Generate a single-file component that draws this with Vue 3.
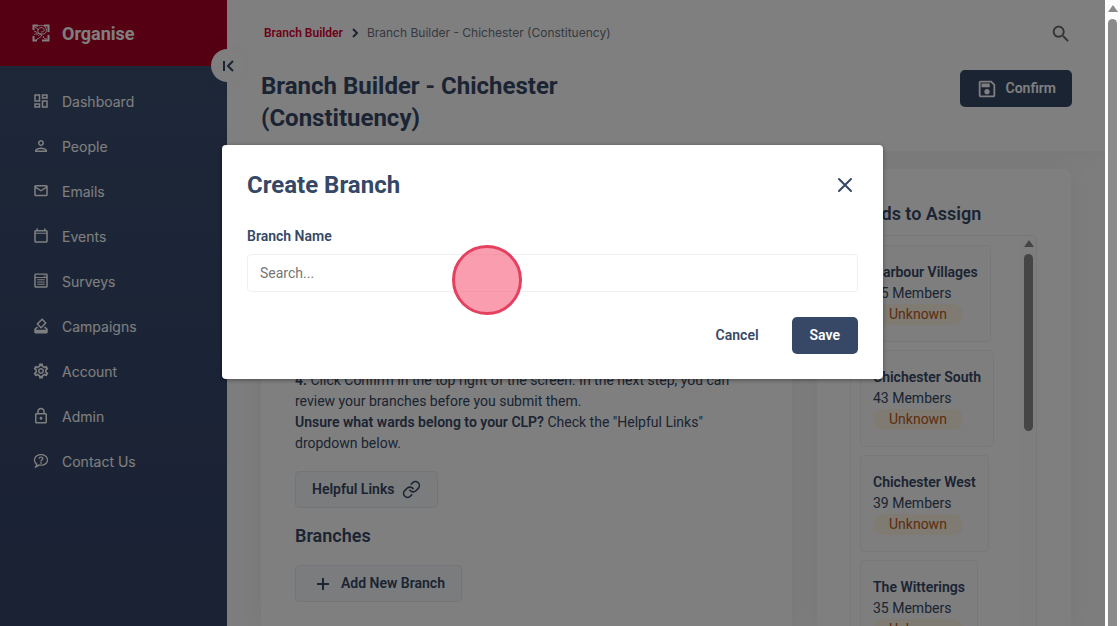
<script setup>
const nav = [
  { label: 'Dashboard', d: 'M19 5v2h-4V5h4M9 5v6H5V5h4m10 8v6h-4v-6h4M9 17v2H5v-2h4M21 3h-8v6h8V3zM11 3H3v10h8V3zm10 8h-8v10h8V11zm-10 4H3v6h8v-6z' },
  { label: 'People', d: 'M12 6c1.1 0 2 .9 2 2s-.9 2-2 2-2-.9-2-2 .9-2 2-2m0 10c2.7 0 5.8 1.29 6 2H6c.23-.72 3.31-2 6-2m0-12C9.79 4 8 5.79 8 8s1.79 4 4 4 4-1.79 4-4-1.79-4-4-4zm0 10c-2.67 0-8 1.34-8 4v2h16v-2c0-2.66-5.33-4-8-4z' },
  { label: 'Emails', d: 'M21 6c0-1.1-.9-2-2-2H5c-1.1 0-2 .9-2 2v11c0 1.1.9 2 2 2h14c1.1 0 2-.9 2-2V6zm-2 0l-7 4.500L5 6h14zm0 11H5V8.300l7 4.500 7-4.500V17z' },
  { label: 'Events', d: 'M19 4h-1V2h-2v2H8V2H6v2H5c-1.1 0-2 .9-2 2v13c0 1.1.9 2 2 2h14c1.1 0 2-.9 2-2V6c0-1.1-.9-2-2-2zm0 15H5V9h14v10zm0-11.500H5V6h14v1.500z' },
  { label: 'Surveys', d: 'M19 2H5c-1.1 0-2 .9-2 2v15c0 1.1.9 2 2 2h14c1.1 0 2-.9 2-2V4c0-1.1-.9-2-2-2zm0 1.800V6.500H5V3.800h14zM5 19V8h14v11H5zM7 9.500h10v1.600H7zM7 12.500h10v1.600H7zM7 15.500h10v1.600H7zM15.500 4.500H18V6h-2.500z' },
  { label: 'Campaigns', d: 'M18 13h-.68l-2 2h1.91L19 17H5l1.78-2h2.05l-2-2H6l-3 3v4c0 1.1.89 2 1.99 2H19c1.1 0 2-.89 2-2v-4l-3-3zm-1-5.05l-4.95 4.95-3.54-3.54 4.95-4.95L17 7.95zm-4.24-5.66L6.39 8.66c-.39.39-.39 1.020 0 1.41l4.950 4.950c.39.39 1.020.39 1.41 0l6.36-6.36c.39-.39.39-1.020 0-1.41L14.160 2.300c-.38-.4-1.010-.4-1.400-.01z' },
  { label: 'Account', d: 'M19.430 12.980c.04-.32.07-.64.07-.98s-.03-.66-.07-.98l2.110-1.650c.19-.15.24-.42.12-.64l-2-3.460c-.12-.22-.39-.3-.61-.22l-2.490 1c-.52-.4-1.080-.73-1.690-.98l-.38-2.650C14.460 2.180 14.250 2 14 2h-4c-.25 0-.46.18-.49.42l-.38 2.650c-.61.25-1.170.59-1.690.98l-2.490-1c-.23-.09-.49 0-.61.22l-2 3.460c-.13.22-.07.49.12.64l2.110 1.650c-.04.32-.07.65-.07.98s.03.66.07.98l-2.110 1.650c-.19.15-.24.42-.12.64l2 3.460c.12.22.39.3.61.22l2.490-1c.52.4 1.080.73 1.690.98l.38 2.650c.03.24.24.42.49.42h4c.25 0 .46-.18.49-.42l.38-2.650c.61-.25 1.170-.59 1.690-.98l2.490 1c.23.09.49 0 .61-.22l2-3.460c.12-.22.07-.49-.12-.64l-2.110-1.650zM17.450 11.270c.04.31.05.52.05.73s-.02.43-.05.73l-.14 1.130 1.590 1.240-.64 1.110-1.880-.76-.98.74c-.43.32-.84.56-1.250.73l-1.060.43-.2 1.350h-1.780l-.2-1.350-1.060-.43c-.43-.18-.83-.41-1.230-.71l-1-.76-1.870.76-.64-1.110 1.590-1.240-.14-1.130c-.03-.31-.05-.54-.05-.74s.02-.43.05-.73l.14-1.130-1.590-1.240.64-1.110 1.880.76.98-.74c.43-.32.84-.56 1.250-.73l1.060-.43.2-1.350h1.780l.2 1.350 1.060.43c.43.18.83.41 1.230.71l1 .76 1.870-.76.64 1.110-1.590 1.240.14 1.130zM12 8c-2.210 0-4 1.790-4 4s1.790 4 4 4 4-1.790 4-4-1.790-4-4-4zm0 6c-1.100 0-2-.9-2-2s.9-2 2-2 2 .9 2 2-.9 2-2 2z' },
  { label: 'Admin', d: 'M18 8h-1V6c0-2.760-2.240-5-5-5S7 3.240 7 6v2H6c-1.100 0-2 .9-2 2v10c0 1.100.9 2 2 2h12c1.100 0 2-.9 2-2V10c0-1.100-.9-2-2-2zM9 6c0-1.660 1.340-3 3-3s3 1.340 3 3v2H9V6zm9 14H6V10h12v10zm-6-3c1.100 0 2-.9 2-2s-.9-2-2-2-2 .9-2 2 .9 2 2 2z' },
  { label: 'Contact Us', d: 'M12 2.500C6.500 2.500 2.500 6 2.500 10.500c0 2.500 1 4.500 2.700 6-.2 1.700-1 3-2.200 4.500 2.700 0 5-1 6.500-2.700 7 1 12-2.700 12-7.800 0-4.500-4-8-9.500-8zm0 14.200c-1.200 0-2.300-.1-3.300-.5-.6.8-1.100 1.200-1.800 1.600.2-.8.3-1.500.3-2.200C5.200 14.300 4.200 12.600 4.200 10.500c0-3.300 3.300-6.200 7.800-6.200s7.800 2.900 7.800 6.200-3.300 6.200-7.800 6.200zM11 13.500h2v2h-2zM8.800 9h1.900c0-.8.6-1.300 1.300-1.300s1.300.5 1.300 1.200c0 1.200-2.300 1.300-2.300 3.600h2c0-1.600 2.300-1.800 2.300-3.900C15.300 7 13.900 6 12 6S8.800 7.200 8.800 9z' }
]
const wards = [
  { name: 'Harbour Villages', members: 45 },
  { name: 'Chichester South', members: 43 },
  { name: 'Chichester West', members: 39 },
  { name: 'The Witterings', members: 35 }
]
</script>

<template>
  <div class="window">
    <div class="page">
      <aside class="sidebar">
        <div class="brand">
          <svg class="logo" viewBox="0 0 18 18" aria-hidden="true">
            <path d="M1.500 6V1.500H6M12 1.500h4.500V8M1.500 12v4.500H5M10 16.500h6.500V11" stroke-width="2" />
            <path d="M3 3l4 3M6 2c3-1 7-1 8 2s0 6-3 6-6-1-5-4 5-3 6-1-1 3-3 3M2 7c3 1 4 3 8 4M2 11c2-2 4-1 5 1M10 11c-1 2-3 3-6 5M11 12c0 2 2 3 4 3" />
          </svg>
          <span>Organise</span>
        </div>
        <nav>
          <a v-for="item in nav" :key="item.label" href="#">
            <svg viewBox="0 0 24 24" aria-hidden="true"><path fill-rule="evenodd" :d="item.d" /></svg>
            <span>{{ item.label }}</span>
          </a>
        </nav>
        <button class="collapse" aria-label="Collapse menu">
          <svg viewBox="0 0 14 12" aria-hidden="true"><path d="M3 1v10M12 1L7 6l5 5" /></svg>
        </button>
      </aside>

      <div class="main">
        <header>
          <div class="topline">
            <div class="crumbs">
              <a href="#">Branch Builder</a>
              <svg viewBox="0 0 8 10" aria-hidden="true"><path d="M2 1l4 4-4 4" /></svg>
              <span>Branch Builder - Chichester (Constituency)</span>
            </div>
            <button class="search" aria-label="Search">
              <svg viewBox="0 0 24 24" aria-hidden="true"><path d="M15.500 14h-.79l-.28-.27C15.410 12.590 16 11.110 16 9.500 16 5.910 13.090 3 9.500 3S3 5.910 3 9.500 5.910 16 9.500 16c1.610 0 3.090-.59 4.230-1.570l.27.28v.79l5 4.990L20.490 19l-4.990-5zm-6 0C7.010 14 5 11.990 5 9.500S7.010 5 9.500 5 14 7.010 14 9.500 11.990 14 9.500 14z" /></svg>
            </button>
          </div>
          <div class="titleline">
            <h1>Branch Builder - Chichester (Constituency)</h1>
            <button class="primary confirm">
              <svg viewBox="0 0 24 24" aria-hidden="true"><path fill-rule="evenodd" d="M17 3H5c-1.100 0-2 .9-2 2v14c0 1.100.9 2 2 2h14c1.100 0 2-.9 2-2V7l-4-4zm2 16H5V5h11.170L19 7.830V19zm-7-7c-1.660 0-3 1.340-3 3s1.340 3 3 3 3-1.340 3-3-1.340-3-3-3zM6 6h9v4H6z" /></svg>
              Confirm
            </button>
          </div>
        </header>

        <div class="content">
          <section class="card builder">
            <p><b>4.</b> Click Confirm in the top right of the screen. In the next step, you can review your branches before you submit them.</p>
            <p><b>Unsure what wards belong to your CLP?</b> Check the "Helpful Links" dropdown below.</p>
            <button class="soft links">
              Helpful Links
              <svg viewBox="0 0 24 24" aria-hidden="true"><path d="M10 13a5 5 0 0 0 7.540.54l3-3a5 5 0 0 0-7.070-7.070l-1.720 1.710M14 11a5 5 0 0 0-7.540-.54l-3 3a5 5 0 0 0 7.070 7.070l1.710-1.710" /></svg>
            </button>
            <h2>Branches</h2>
            <button class="soft add">
              <svg viewBox="0 0 14 14" aria-hidden="true"><path d="M7 1v12M1 7h12" /></svg>
              Add New Branch
            </button>
          </section>

          <section class="card assign">
            <h2>Wards to Assign</h2>
            <div class="scroller">
              <ul>
                <li v-for="w in wards" :key="w.name">
                  <b>{{ w.name }}</b>
                  <span>{{ w.members }} Members</span>
                  <em>Unknown</em>
                </li>
              </ul>
              <div class="bar inner">
                <i class="arrow"></i>
                <i class="thumb"></i>
              </div>
            </div>
          </section>
        </div>
      </div>

      <div class="overlay">
        <form class="modal" role="dialog" aria-labelledby="modal-title" @submit.prevent>
          <div class="modal-head">
            <h2 id="modal-title">Create Branch</h2>
            <button type="button" class="close" aria-label="Close">
              <svg viewBox="0 0 16 16" aria-hidden="true"><path d="M2 2l12 12M14 2L2 14" /></svg>
            </button>
          </div>
          <label for="branch-name">Branch Name</label>
          <input id="branch-name" type="text" placeholder="Search..." />
          <div class="actions">
            <button type="button" class="cancel">Cancel</button>
            <button class="primary">Save</button>
          </div>
          <span class="pointer"></span>
        </form>
      </div>
    </div>
    <div class="bar outer">
      <i class="arrow"></i>
      <i class="thumb"></i>
    </div>
  </div>
</template>

<style>
body { overflow: hidden; }
</style>

<style scoped>
* { box-sizing: border-box; }
.window {
  display: flex;
  height: 100vh;
  font: 14px/21px Roboto, "Liberation Sans", sans-serif;
  color: #364866;
  background: #fcfcfc;
}
.page {
  position: relative;
  display: flex;
  flex: 1;
  min-width: 0;
  overflow: hidden;
  background: #fff;
}
h1, h2, p, ul { margin: 0; padding: 0; }
a { text-decoration: none; color: inherit; }
button { font: inherit; color: inherit; border: 0; background: none; padding: 0; }
svg { display: block; flex: none; fill: currentColor; }

.sidebar {
  position: relative;
  z-index: 1;
  flex: 0 0 227px;
  background: linear-gradient(#3b5072, #344468);
  color: #fff;
}
.brand {
  display: flex;
  align-items: center;
  gap: 12px;
  height: 66px;
  padding-left: 32px;
  background: #ac0026;
  font-size: 18px;
  font-weight: 700;
}
.logo { width: 18px; height: 18px; fill: none; stroke: currentColor; stroke-width: 1; }
nav { padding-top: 13px; font-family: Inter, "Liberation Sans", sans-serif; }
nav a {
  display: flex;
  align-items: center;
  gap: 12px;
  height: 45px;
  padding-left: 32px;
}
nav svg { width: 18px; height: 18px; margin-bottom: 2px; }
.collapse {
  position: absolute;
  top: 49px;
  right: -17px;
  display: grid;
  place-items: center;
  width: 33px;
  height: 33px;
  border-radius: 50%;
  background: #fff;
  color: #364866;
  box-shadow: 0 0 24px #0000000a;
}
.collapse svg { width: 14px; height: 12px; fill: none; stroke: currentColor; stroke-width: 2; }

.main { flex: 1; min-width: 0; background: #fafafa; display: flex; flex-direction: column; }
header {
  flex: none;
  height: 151px;
  padding: 22px 33px 0 34px;
  background: #fff;
  box-shadow: 0 4px 20px #0000000a;
}
.topline, .titleline { display: flex; justify-content: space-between; align-items: flex-start; }
.crumbs { display: flex; align-items: center; gap: 8px; padding-left: 3px; font-size: 12px; line-height: 22px; color: #6b7280; }
.crumbs a { color: #dc0032; font-weight: 600; }
.crumbs span { font-family: Inter, "Liberation Sans", sans-serif; }
.crumbs svg { width: 8px; height: 10px; fill: none; stroke: #364866; stroke-width: 2; }
.search { color: #666; margin-top: 1px; }
.search svg { width: 22px; height: 22px; }
.titleline { margin-top: 25px; }
h1 { font-size: 24px; line-height: 32px; font-weight: 700; max-width: 340px; }
.primary {
  height: 37px;
  padding: 0 18px;
  border-radius: 5px;
  background: #364866;
  color: #fff;
  font-weight: 600;
}
.confirm { display: flex; align-items: center; gap: 8px; padding: 0 16px; }
.confirm svg { width: 22px; height: 22px; }

.content { display: flex; flex: 1; gap: 25px; padding: 18px 34px 0; min-height: 0; }
.card { border-radius: 8px 8px 0 0; background: #fff; box-shadow: 0 0 24px #0000000d; overflow: hidden; }
.builder { flex: 1; padding: 201px 60px 0 34px; }
.soft {
  display: flex;
  align-items: center;
  height: 37px;
  padding: 0 16px;
  border: 1px solid #e6ebf1;
  border-radius: 4px;
  background: #f5f8fa;
  font-weight: 600;
}
.card h2 { font-size: 18px; line-height: 24px; font-weight: 600; }
.links { margin-top: 17px; gap: 8px; }
.links svg { width: 19px; height: 19px; fill: none; stroke: currentColor; stroke-width: 2; stroke-linecap: round; }
.builder h2 { margin: 16px 0 17px; }
.add { padding-left: 20px; gap: 11px; }
.add svg { width: 14px; height: 14px; fill: none; stroke: currentColor; stroke-width: 2; }

.assign { flex: 0 0 254px; display: flex; flex-direction: column; padding: 33px 34px 0 33px; }
.scroller {
  display: flex;
  justify-content: space-between;
  flex: 1;
  min-height: 0;
  margin-top: 9px;
  border: 1px solid #f0f0f0;
  border-bottom: 0;
  border-radius: 4px 4px 0 0;
}
ul { display: flex; flex-direction: column; align-items: flex-start; gap: 8px; padding: 9px; list-style: none; }
li {
  display: flex;
  flex: none;
  flex-direction: column;
  align-items: flex-start;
  padding: 16px 12px;
  border: 1px solid #f0f0f0;
  border-radius: 4px;
  background: #fcfcfc;
  white-space: nowrap;
}
li b, p b { font-weight: 600; }
li em { padding: 0 16px; border-radius: 11px; background: #fff4e5; color: #bb5a18; font-style: normal; }

.bar { display: flex; flex-direction: column; align-items: center; flex: none; width: 15px; }
.arrow { width: 0; border: 5px solid transparent; border-top: 0; border-bottom: 7px solid #8b8b8b; }
.thumb { width: 9px; border-radius: 5px; background: #8b8b8b; }
.inner { padding-top: 4px; background: #fcfcfc; }
.inner .thumb { height: 177px; margin-top: 7px; }
.outer { padding-top: 5px; }
.outer .thumb { flex: 1; margin-top: 7px; border-radius: 5px 5px 0 0; }

.overlay {
  position: absolute;
  z-index: 2;
  inset: 0;
  display: flex;
  justify-content: center;
  align-items: flex-start;
  padding: 145px 24px 0;
  background: #00000080;
}
.modal {
  position: relative;
  width: 100%;
  max-width: 661px;
  padding: 24px 25px 25px;
  border-radius: 4px;
  background: #fff;
  box-shadow: 0 1px 4px #0006;
}
.modal-head { display: flex; justify-content: space-between; align-items: center; height: 32px; }
.modal h2 { font-size: 24px; line-height: 32px; font-weight: 700; }
.close { padding: 5px; }
.close svg { width: 16px; height: 16px; fill: none; stroke: currentColor; stroke-width: 2; stroke-linecap: round; }
label { display: block; margin-top: 25px; font-weight: 600; }
input {
  display: block;
  width: 100%;
  height: 38px;
  margin-top: 7px;
  padding: 0 12px;
  border: 1px solid #f0f0f0;
  border-radius: 4px;
  font: inherit;
  color: inherit;
  background: #fff;
}
input::placeholder { color: #757575; }
.actions { display: flex; justify-content: flex-end; align-items: center; gap: 33px; margin-top: 25px; }
.cancel { font-weight: 600; }
.pointer {
  position: absolute;
  top: 100px;
  left: 230px;
  width: 70px;
  height: 70px;
  border: 3px solid #e5405f;
  border-radius: 50%;
  background: #f6547290;
}
</style>
